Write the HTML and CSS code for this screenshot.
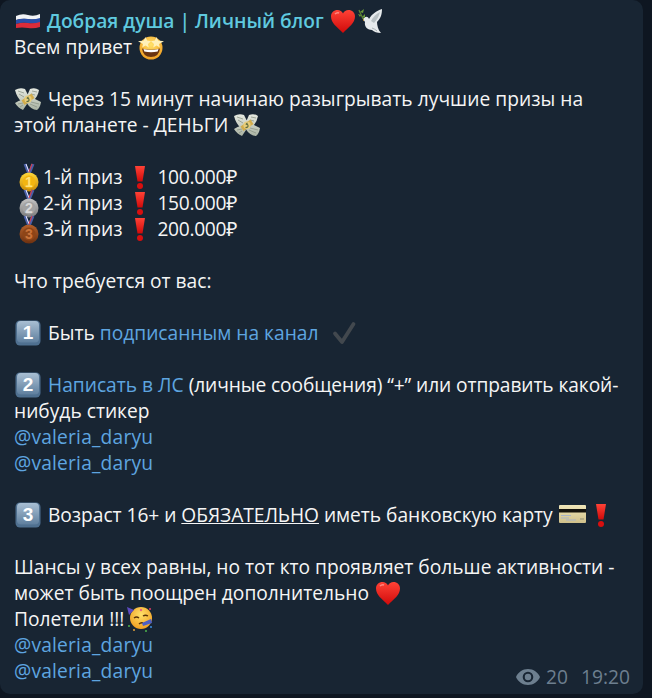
FILE: index.html
```html
<!DOCTYPE html>
<html lang="ru">
<head>
<meta charset="utf-8">
<title>Добрая душа</title>
<link rel="stylesheet" href="styles.css">
</head>
<body>
<svg class="defs" aria-hidden="true">
<defs>
<linearGradient id="g-key" x1="0" y1="0" x2="0" y2="1"><stop offset="0" stop-color="#a9bfd3"/><stop offset="1" stop-color="#5f7f9e"/></linearGradient>
<radialGradient id="g-face" cx=".5" cy=".35" r=".7"><stop offset="0" stop-color="#ffe16a"/><stop offset="1" stop-color="#f09a1c"/></radialGradient>
<linearGradient id="g-gold" x1="0" y1="0" x2="0" y2="1"><stop offset="0" stop-color="#ffd83a"/><stop offset="1" stop-color="#c98a06"/></linearGradient>
<linearGradient id="g-silver" x1="0" y1="0" x2="0" y2="1"><stop offset="0" stop-color="#c4c4c4"/><stop offset="1" stop-color="#7a7a7a"/></linearGradient>
<linearGradient id="g-bronze" x1="0" y1="0" x2="0" y2="1"><stop offset="0" stop-color="#b4602a"/><stop offset="1" stop-color="#6e3110"/></linearGradient>
<linearGradient id="g-red" x1="0" y1="0" x2="0" y2="1"><stop offset="0" stop-color="#ff4236"/><stop offset="1" stop-color="#d00a0a"/></linearGradient>
<linearGradient id="g-card" x1="0" y1="0" x2="0" y2="1"><stop offset="0" stop-color="#efe6b8"/><stop offset="1" stop-color="#cfc08a"/></linearGradient>
<linearGradient id="g-wing" x1="0" y1="0" x2="0" y2="1"><stop offset="0" stop-color="#e6eae2"/><stop offset="1" stop-color="#a9b2a2"/></linearGradient>
<symbol id="e-flag" viewBox="0 0 26 26">
<path d="M1 8q6-3 12-1t12-1v5q-6 1-12 0t-12 1z" fill="#f1f3f6"/>
<path d="M1 12q6-2 12-1t12-1v5q-6 1-12 0t-12 1z" fill="#2a4fa8"/>
<path d="M1 16q6-2 12-1t12-1v5q-6 2-12 1t-12 0z" fill="#dc2c3a"/>
</symbol>
<symbol id="e-heart" viewBox="0 0 26 26">
<path d="M13 25C7 19 1 15 1 8.500 1 4.500 4 2 7.500 2 10 2 12 3.300 13 5.500 14 3.300 16 2 18.500 2 22 2 25 4.500 25 8.500 25 15 19 19 13 25z" fill="url(#g-red)"/>
<path d="M5 6q2-2 4-1" stroke="#ff8a80" stroke-width="1.500" fill="none"/>
</symbol>
<symbol id="e-dove" viewBox="0 0 28 26">
<path d="M6 11C8 8 11 8 12 11 15 6 19 3 25 1 25 6 24 10 20 14 20 17 21 22 24 25 20 25 17 24 15 22 11 22 7 19 8 14z" fill="#e6eaec"/>
<path d="M14 13C16 9 19 6 23 4 22 8 20 12 17 15z" fill="#b9c1c4"/>
<path d="M15 20q3 1 5 3" stroke="#a9b1b4" stroke-width="1" fill="none"/>
<path d="M7 12L6 12" stroke="#d6a13a" stroke-width="1.500"/>
<path d="M6 11C5 8 3 5 2 2" stroke="#5f8433" stroke-width="1.200" fill="none"/>
<path d="M4 7L1 6 3 9zM3 4l4-3-1 4zM5 9l3-3v4z" fill="#6b9a3a"/>
</symbol>
<symbol id="e-star" viewBox="0 0 26 26">
<circle cx="13" cy="14" r="11.500" fill="url(#g-face)"/>
<path d="M4 14.500q9 2.500 18 0-1 8.500-9 8.500t-9-8.500z" fill="#6b3410"/>
<path d="M5.500 15q7.500 2 15 0l-.8 2.500q-6.700 1.500-13.400 0z" fill="#fff"/>
<path d="M7.500 3l1.700 3.600L13 7.200 10 10l.8 3.500-3.300-2-3.300 2L5 10 0 7.200l5.800-.6zM18.500 3l1.700 3.600 5.800.6-5 2.800.8 3.500-3.300-2-3.300 2 .8-3.500-3-2.800 3.800-.6z" fill="#fff0b8"/>
</symbol>
<symbol id="e-money" viewBox="0 0 28 24">
<path d="M1 3Q6 0 11 2l4 8-7 5Q3 11 1 3zM13 9l3-7q5-2 9 1-1 6-5 10zM12 15l5-5 10 5q-1 6-4 8-6 0-11-8zM1 16q4-3 8-3l4 4-4 6q-5-2-8-7z" fill="url(#g-wing)"/>
<path d="M4 4l6 2M5 7l5 3M18 4l5 1M17 7l4 1M16 17l7 3M17 15l8 2M4 17l5-1M6 20l3-2" stroke="#8d9686" stroke-width=".8"/>
<path d="M7.500 13.500L17.500 6.500l3 4.500-10 7z" fill="#d2ad4c"/>
<circle cx="14" cy="12.200" r="3.600" fill="#e6cc7a"/>
<path d="M12.500 14.500q3 0 2.500-1.800t-1.500-1.400 1-1.500" stroke="#5b6b3e" stroke-width="1.100" fill="none"/>
</symbol>
<symbol id="e-m1" viewBox="0 0 26 32">
<path d="M9 3L13 13 17 3" stroke="#4a5fa8" stroke-width="3" fill="none"/><path d="M10 3l3 8" stroke="#eef" stroke-width="1"/><path d="M16 3l-3 8" stroke="#d04050" stroke-width="1.200"/>
<circle cx="13" cy="21" r="9.500" fill="url(#g-gold)"/><circle cx="13" cy="21" r="6.500" fill="#f2b511"/>
<text class="medalnum gold" x="13" y="26" text-anchor="middle">1</text>
</symbol>
<symbol id="e-m2" viewBox="0 0 26 32">
<path d="M9 3L13 13 17 3" stroke="#4a5fa8" stroke-width="3" fill="none"/><path d="M10 3l3 8" stroke="#eef" stroke-width="1"/><path d="M16 3l-3 8" stroke="#d04050" stroke-width="1.200"/>
<circle cx="13" cy="21" r="9.500" fill="url(#g-silver)"/><circle cx="13" cy="21" r="6.500" fill="#a2a2a2"/>
<text class="medalnum silver" x="13" y="26" text-anchor="middle">2</text>
</symbol>
<symbol id="e-m3" viewBox="0 0 26 32">
<path d="M9 3L13 13 17 3" stroke="#4a5fa8" stroke-width="3" fill="none"/><path d="M10 3l3 8" stroke="#eef" stroke-width="1"/><path d="M16 3l-3 8" stroke="#d04050" stroke-width="1.200"/>
<circle cx="13" cy="21" r="9.500" fill="url(#g-bronze)"/><circle cx="13" cy="21" r="6.500" fill="#8e4517"/>
<text class="medalnum bronze" x="13" y="26" text-anchor="middle">3</text>
</symbol>
<symbol id="e-bang" viewBox="0 0 26 26">
<path d="M8 2h10L15.500 17.500h-5z" fill="url(#g-red)"/><circle cx="13" cy="22" r="3" fill="#d80f0f"/>
</symbol>
<symbol id="e-key" viewBox="0 0 26 26">
<rect x="0.500" y="0.500" width="25" height="25" rx="4.500" fill="#4f7090"/>
<rect x="2" y="1" width="22" height="21.500" rx="4" fill="url(#g-key)"/>
</symbol>
<symbol id="e-check" viewBox="0 0 28 26">
<path d="M5 13.500L12 22 23.500 4" stroke="#42484e" stroke-width="3.800" stroke-linecap="round" stroke-linejoin="round" fill="none"/>
</symbol>
<symbol id="e-card" viewBox="0 0 28 26">
<rect x="1" y="3" width="27" height="18" rx="1" fill="url(#g-card)"/>
<rect x="1" y="7" width="27" height="3.500" fill="#14130d"/>
<path d="M3 13h10v1H3zM3 15.500h8v1H3zM8 17.500h10v1H8z" fill="#a9b4c6"/><rect x="22" y="16" width="4" height="2" fill="#b4ad86"/>
</symbol>
<symbol id="e-party" viewBox="0 0 28 26">
<circle cx="17" cy="12" r="11" fill="url(#g-face)"/>
<path d="M3 1l7 3-5 5z" fill="#5d4cc0"/>
<path d="M10 12q2.500-2 5 0M19 10q2.500-1.500 5 0" stroke="#5a3208" stroke-width="1.400" fill="none"/>
<path d="M15 18q2-2 4-1" stroke="#5a3208" stroke-width="1.400" fill="none"/>
<path d="M18 17l9-4 1 4-9 3z" fill="#4d5fc4"/>
<circle cx="5" cy="20" r="1" fill="#4db34d"/><circle cx="26" cy="3" r="1" fill="#e23d6a"/><circle cx="27" cy="21" r="1" fill="#3d8fe2"/><circle cx="17" cy="4" r="1.200" fill="#e8647f"/><circle cx="10" cy="24" r="1" fill="#e2a23d"/><circle cx="22" cy="25" r="1" fill="#4db34d"/>
</symbol>
</defs>
</svg>
<main class="bubble">
<h1 class="title"><svg class="em"><use href="#e-flag"/></svg> Добрая душа | Личный блог <svg class="em"><use href="#e-heart"/></svg><svg class="em"><use href="#e-dove"/></svg></h1>
<p class="para">Всем привет <svg class="em"><use href="#e-star"/></svg></p>
<p class="para"><svg class="em lead"><use href="#e-money"/></svg> <span class="wide">Через 15 минут начинаю разыгрывать лучшие призы на</span><br>этой планете - ДЕНЬГИ <svg class="em"><use href="#e-money"/></svg></p>
<p class="para">
<svg class="medal"><use href="#e-m1"/></svg>1-й приз <svg class="em bang"><use href="#e-bang"/></svg> <span class="price">100.000₽</span><br>
<svg class="medal"><use href="#e-m2"/></svg>2-й приз <svg class="em bang"><use href="#e-bang"/></svg> <span class="price">150.000₽</span><br>
<svg class="medal"><use href="#e-m3"/></svg>3-й приз <svg class="em bang"><use href="#e-bang"/></svg> <span class="price">200.000₽</span>
</p>
<p class="para">Что требуется от вас:</p>
<p class="para"><svg class="em lead"><use href="#e-key"/><text class="keynum" x="14" y="19" text-anchor="middle">1</text></svg> Быть <a class="link">подписанным на канал</a> &nbsp;<svg class="em check"><use href="#e-check"/></svg></p>
<p class="para"><svg class="em lead"><use href="#e-key"/><text class="keynum" x="14" y="19" text-anchor="middle">2</text></svg> <a class="link">Написать в ЛС</a> <span class="tight">(личные сообщения) “+” или отправить какой-</span><br>нибудь стикер<br><a class="link mention">@valeria_daryu</a><br><a class="link mention">@valeria_daryu</a></p>
<p class="para"><svg class="em lead"><use href="#e-key"/><text class="keynum" x="14" y="19" text-anchor="middle">3</text></svg> <span class="snug">Возраст 16+ и <u>ОБЯЗАТЕЛЬНО</u> иметь банковскую карту</span> <svg class="em card"><use href="#e-card"/></svg> <svg class="em bang"><use href="#e-bang"/></svg></p>
<div class="last">
<p class="para-end">Шансы у всех равны, но тот кто проявляет больше активности -<br>может быть поощрен дополнительно <svg class="em"><use href="#e-heart"/></svg><br>Полетели !!!<svg class="em"><use href="#e-party"/></svg><br><a class="link mention">@valeria_daryu</a><br><a class="link mention">@valeria_daryu</a></p>
<div class="meta">
<svg class="eye" viewBox="0 0 24 16"><path d="M12 0C6.500 0 2 3.300 0 8c2 4.700 6.500 8 12 8s10-3.300 12-8c-2-4.700-6.500-8-12-8zm0 13.300A5.300 5.300 0 1 1 12 2.700a5.300 5.300 0 0 1 0 10.600zm0-8.500A3.200 3.200 0 1 0 12 11.200 3.200 3.200 0 0 0 12 4.800z" fill="#6d7f8f"/></svg>
<span class="views">20</span>
<span class="time">19:20</span>
</div>
</div>
</main>
</body>
</html>
```
FILE: styles.css
```css
html, body { margin: 0; padding: 0; }
body {
  width: 652px;
  height: 698px;
  overflow: hidden;
  background: #0e1621;
  font-family: "Open Sans", "Noto Sans", sans-serif;
  font-size: 19.2px;
  line-height: 26px;
  color: #f5f5f5;
}
.defs { position: absolute; width: 0; height: 0; }
.bubble {
  box-sizing: border-box;
  width: 643px;
  height: 694px;
  padding: 8px 14px 0;
  background: #182533;
  border-radius: 10px;
}
.title {
  margin: 0;
  font-size: 19.2px;
  line-height: 26px;
  font-weight: 600;
  color: #5fc9df;
}
.para { margin: 0 0 26px; }
.para-end { margin: 0; }
.em {
  width: 28px;
  height: 26px;
  margin: -6px 0;
  vertical-align: 0;
}
.lead { margin-right: 1px; }
.bang { width: 26px; margin-right: -1px; }
.card { margin-right: -3px; }
.check { margin-left: 2px; }
.medal {
  width: 26px;
  height: 32px;
  margin: -8px 1px -8px 2px;
  vertical-align: -1px;
}
.keynum { font: 700 19px "Liberation Sans", sans-serif; fill: #fff; }
.medalnum { font: 700 14px "Liberation Sans", sans-serif; }
.gold { fill: #ffe27a; }
.silver { fill: #d8d8d8; }
.bronze { fill: #c9733a; }
.link { color: #5ea5e0; }
.mention { letter-spacing: 0.2px; }
.wide { letter-spacing: 0.04px; }
.tight { letter-spacing: -0.1px; }
.snug { letter-spacing: -0.04px; }
.price { letter-spacing: -0.3px; }
.last { position: relative; }
.meta {
  position: absolute;
  right: -1px;
  bottom: -6px;
  display: flex;
  align-items: center;
  gap: 6px;
  color: #6d7f8f;
}
.eye { width: 24px; height: 16px; }
.views { margin-right: 7px; }
```
